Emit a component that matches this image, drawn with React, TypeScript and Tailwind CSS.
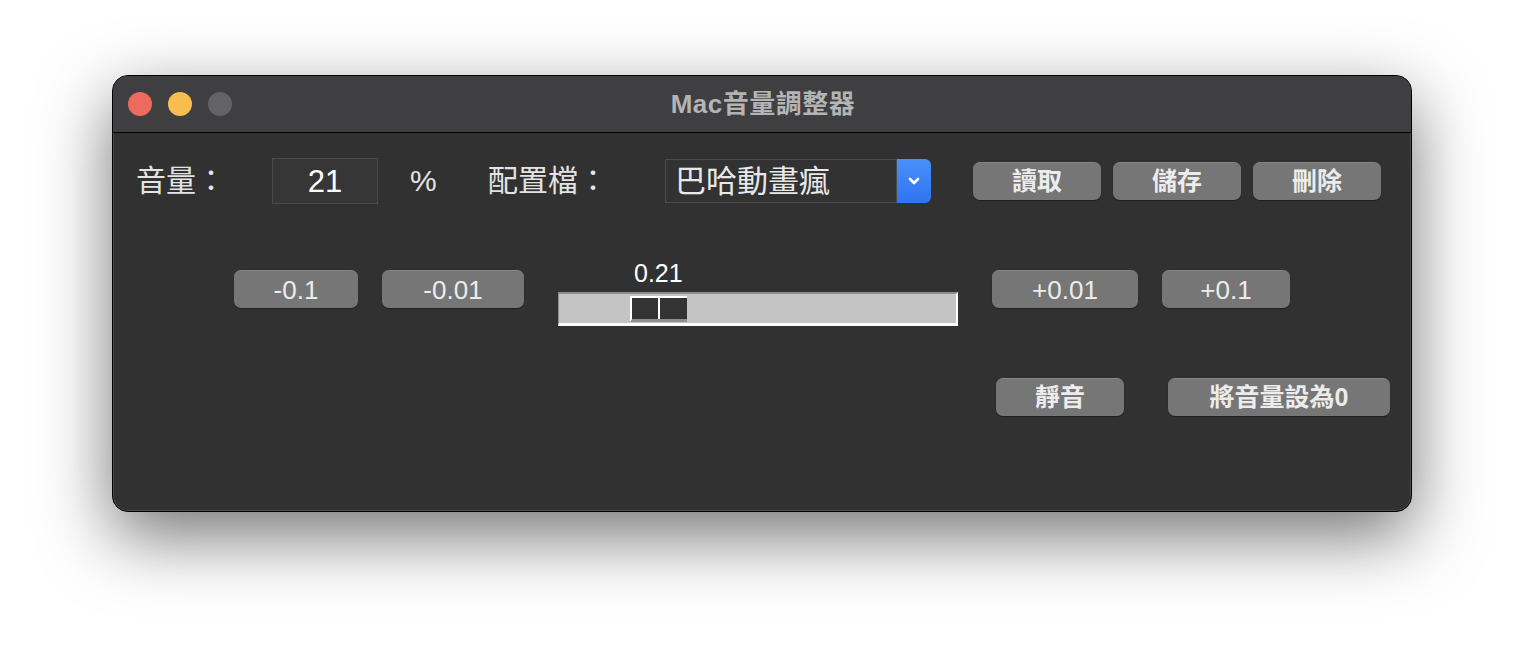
import React from "react";

const font = { fontFamily: '"Liberation Sans", "Noto Sans CJK TC", sans-serif' };

function Btn({ label, w, bold = false }: { label: string; w: string; bold?: boolean }) {
  return (
    <button
      className={`${w} h-[38px] rounded-[7px] bg-[#767676] border-t border-[#858585] shadow-[0_1px_1px_rgba(0,0,0,0.35)] leading-none text-[#ececec] flex items-center justify-center ${
        bold ? "font-bold text-[25px]" : "font-normal text-[26px]"
      }`}
    >
      {label}
    </button>
  );
}

export default function App() {
  return (
    <div className="w-[1524px] h-[660px] bg-white overflow-hidden pt-[75px] pl-[112px]" style={font}>
      <div className="w-[1300px] h-[437px] rounded-[16px] border border-black bg-[#313131] overflow-hidden shadow-[0_24px_70px_rgba(0,0,0,0.55),inset_0_0_0_1px_rgba(255,255,255,0.14)] flex flex-col">
        {/* title bar */}
        <div className="h-[57px] bg-[#3f3f41] border-b border-black flex items-center relative shrink-0">
          <div className="flex gap-[16px] pl-[15px]">
            <span className="w-[24px] h-[24px] rounded-full bg-[#ee6a5f]" />
            <span className="w-[24px] h-[24px] rounded-full bg-[#f5be4f]" />
            <span className="w-[24px] h-[24px] rounded-full bg-[#636366]" />
          </div>
          <div className="absolute inset-0 flex items-center justify-center pl-[2px] text-[26px] font-bold text-[#b4b4b4] tracking-[0.5px]">
            Mac音量調整器
          </div>
        </div>

        {/* content */}
        <div className="flex flex-col pl-[23px] pt-[25px]">
          {/* row 1 */}
          <div className="flex items-center h-[46px]">
            <span className="w-[136px] text-[30px] text-[#e4e4e4] leading-none">音量：</span>
            <div className="w-[106px] h-[46px] bg-[#363636] border border-[#4a4a4a] flex items-center justify-center text-[31px] text-white leading-none">
              21
            </div>
            <span className="w-[110px] pl-[32px] text-[30px] text-[#e4e4e4] leading-none">%</span>
            <span className="w-[177px] text-[30px] text-[#e4e4e4] leading-none">配置檔：</span>
            <div className="w-[266px] h-[44px] flex">
              <div className="flex-1 bg-[#323232] border border-[#4b4b4b] flex items-center pl-[9px] text-[31px] text-[#e8e8e8] leading-none">
                巴哈動畫瘋
              </div>
              <div className="w-[34px] h-full rounded-r-[6px] bg-gradient-to-b from-[#4a90fb] to-[#2f74f0] flex items-center justify-center">
                <svg width="14" height="10" viewBox="0 0 14 10">
                  <polyline points="3,3 7,7 11,3" fill="none" stroke="white" strokeWidth="2.6" strokeLinecap="round" strokeLinejoin="round" />
                </svg>
              </div>
            </div>
            <div className="flex gap-[12px] ml-[42px]">
              <Btn label="讀取" w="w-[128px]" bold />
              <Btn label="儲存" w="w-[128px]" bold />
              <Btn label="刪除" w="w-[128px]" bold />
            </div>
          </div>

          {/* row 2 */}
          <div className="flex items-start mt-[58px]">
            <div className="ml-[98px] mt-[8px]">
              <Btn label="-0.1" w="w-[124px]" />
            </div>
            <div className="ml-[24px] mt-[8px]">
              <Btn label="-0.01" w="w-[142px]" />
            </div>
            <div className="ml-[34px] w-[400px] flex flex-col">
              <div className="h-[30px] pl-[76px] text-[25px] text-white leading-[22px]">0.21</div>
              <div className="h-[34px] bg-[#c4c4c4] border-t-[2px] border-[#8c8c8c] border-b-[3px] border-b-white border-r-[2px] border-r-white border-l border-l-[#8c8c8c] flex items-start pt-[2px]">
                <div className="ml-[71px] h-[26px] flex border-l-[2px] border-l-white border-t-[2px] border-t-white border-b-[3px] border-b-[#8e8e8e] bg-[#8e8e8e]">
                  <span className="w-[26px] h-full bg-[#333333]" />
                  <span className="w-[2px] h-full bg-white" />
                  <span className="w-[27px] h-full bg-[#333333]" />
                </div>
              </div>
            </div>
            <div className="ml-[34px] mt-[8px]">
              <Btn label="+0.01" w="w-[146px]" />
            </div>
            <div className="ml-[24px] mt-[8px]">
              <Btn label="+0.1" w="w-[128px]" />
            </div>
          </div>

          {/* row 3 */}
          <div className="flex mt-[52px]">
            <div className="ml-[860px]">
              <Btn label="靜音" w="w-[128px]" bold />
            </div>
            <div className="ml-[44px]">
              <Btn label="將音量設為0" w="w-[222px]" bold />
            </div>
          </div>
        </div>
      </div>
    </div>
  );
}
